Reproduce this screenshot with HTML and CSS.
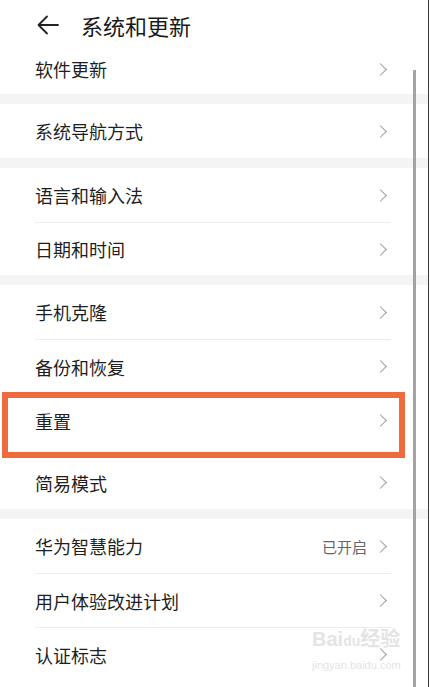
FILE: index.html
```html
<!DOCTYPE html>
<html lang="zh-CN">
<head>
<meta charset="utf-8">
<title>系统和更新</title>
<link rel="stylesheet" href="styles.css">
</head>
<body>
<div class="screen">
  <header class="header">
    <svg class="back" width="22" height="20" viewBox="0 0 22 20"><path d="M10 1.5 L1.5 10 L10 18.5 M1.5 10 H21" fill="none" stroke="#222" stroke-width="1.8" stroke-linecap="round" stroke-linejoin="round"/></svg>
    <span class="title">系统和更新</span>
  </header>

  <section class="group">
    <div class="row row-first"><div class="row-in"><span class="label">软件更新</span><i class="chev"></i></div></div>
  </section>
  <div class="gap"></div>
  <section class="group">
    <div class="row"><div class="row-in"><span class="label">系统导航方式</span><i class="chev"></i></div></div>
  </section>
  <div class="gap"></div>
  <section class="group">
    <div class="row"><div class="row-in"><span class="label">语言和输入法</span><i class="chev"></i></div></div>
    <div class="row row-short"><div class="row-in line"><span class="label">日期和时间</span><i class="chev"></i></div></div>
  </section>
  <div class="gap"></div>
  <section class="group">
    <div class="row"><div class="row-in"><span class="label">手机克隆</span><i class="chev"></i></div></div>
    <div class="row"><div class="row-in line"><span class="label">备份和恢复</span><i class="chev"></i></div></div>
    <div class="row row-mark"><div class="row-in line"><span class="label">重置</span><i class="chev"></i></div><div class="mark"></div></div>
    <div class="row row-tall"><div class="row-in"><span class="label">简易模式</span><i class="chev"></i></div></div>
  </section>
  <div class="gap"></div>
  <section class="group">
    <div class="row"><div class="row-in"><span class="label">华为智慧能力</span><span class="value">已开启</span><i class="chev"></i></div></div>
    <div class="row"><div class="row-in line"><span class="label">用户体验改进计划</span><i class="chev"></i></div></div>
    <div class="row"><div class="row-in line"><span class="label">认证标志</span><i class="chev"></i></div></div>
  </section>

  <div class="scrollbar"></div>
  <div class="watermark"><span class="wm-big">Bai<span class="wm-du">du</span>经验</span><span class="wm-small">jingyan.baidu.com</span></div>
</div>
</body>
</html>
```

FILE: styles.css
```css
* { box-sizing: border-box; }
html, body { margin: 0; padding: 0; background: #fff; }
body {
  width: 430px;
  height: 687px;
  overflow: hidden;
  font-family: "Noto Sans CJK SC", "Noto Sans", sans-serif;
  color: #1f1f1f;
}
.screen {
  position: relative;
  width: 429px;
  height: 687px;
  border-right: 1px solid #3a3a3a;
  background: #fff;
  overflow: hidden;
}
.header {
  height: 44px;
  display: flex;
  align-items: center;
  padding-left: 37px;
  padding-top: 5px;
}
.back { display: block; }
.title {
  margin-left: 22px;
  font-size: 22px;
  line-height: 1;
  color: #1a1a1a;
}
.group { background: #fff; }
.gap { height: 10px; background: #f4f4f4; }
.row {
  height: 54px;
  padding: 0 35px 0 35px;
  position: relative;
}
.row-first { height: 50px; }
.row-short { height: 53px; }
.row-tall { height: 62px; }
.row-tall .row-in { padding-top: 9px; }
.row-in {
  height: 100%;
  display: flex;
  align-items: center;
  margin-right: 2px;
}
.row-in.line { border-top: 1px solid #ececec; }
.label {
  flex: 1;
  font-size: 18px;
  line-height: 1;
  color: #1f1f1f;
}
.value {
  font-size: 15px;
  color: #666;
  margin-right: 9px;
}
.chev {
  width: 9px;
  height: 9px;
  border-top: 1.5px solid #9a9a9a;
  border-right: 1.5px solid #9a9a9a;
  transform: rotate(45deg);
  margin-right: 6px;
}
.mark {
  position: absolute;
  left: 2px;
  top: -1px;
  width: 403px;
  height: 66px;
  border: 6px solid #ef6b3e;
  pointer-events: none;
}
.scrollbar {
  position: absolute;
  left: 413px;
  top: 70px;
  bottom: 0;
  width: 3px;
  background: #a3a3a3;
}
.watermark {
  position: absolute;
  left: 312px;
  top: 628px;
  display: flex;
  flex-direction: column;
  color: #e4e4e4;
  font-family: "Liberation Sans", "Noto Sans CJK SC", sans-serif;
}
.wm-big { font-size: 20px; font-weight: bold; line-height: 22px; }
.wm-du { font-size: 14px; }
.wm-small { font-size: 11px; line-height: 14px; margin-top: 6px; }
```
